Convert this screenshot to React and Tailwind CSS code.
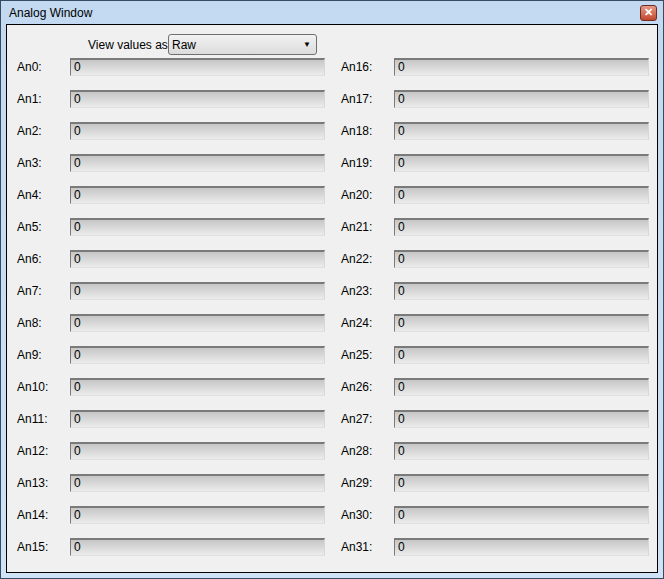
export default function App() {
  const rows = Array.from({ length: 16 }, (_, i) => i);
  const Field = ({ label }) => (
    <div className="flex items-center h-[18px]">
      <div className="w-[53px] text-[12px] text-black">{label}</div>
      <div className="w-[255px] h-[18px] border-t-2 border-l border-t-[#7a7a7a] border-l-[#7a7a7a] border-r border-b border-r-[#d8d8d8] border-b-[#e0e0e0] bg-gradient-to-b from-[#c6c6c6] to-[#ececec] text-[12px] leading-[15px] pl-[3px] text-black">0</div>
    </div>
  );
  return (
    <div className="w-[664px] h-[579px] border border-[#384a5f] bg-gradient-to-b from-[#c2d9f1] to-[#cfe2f6] flex flex-col px-[5px] pb-[5px]" style={{ fontFamily: "'Liberation Sans', Arial, sans-serif" }}>
      <div className="h-[23px] flex items-center justify-between pl-[3px]">
        <span className="text-[12px] text-black">Analog Window</span>
        <div className="w-[17px] h-[16px] rounded-[3px] border border-[#6d2d22] bg-gradient-to-b from-[#e59a87] to-[#c2452a] flex items-center justify-center text-white text-[11px] font-bold leading-none mr-[1px]">✕</div>
      </div>
      <div className="flex-1 border border-black bg-[#f0f0f0] flex flex-col pl-[10px] pt-[9px]">
        <div className="flex items-center h-[21px] mb-[3px]">
          <span className="ml-[71px] text-[12px] text-black w-[80px] whitespace-nowrap">View values as:</span>
          <div className="w-[149px] h-[21px] rounded-[3px] border border-[#707070] bg-gradient-to-b from-[#f2f2f2] to-[#dcdcdc] flex items-center justify-between px-[3px]">
            <span className="text-[12px] text-black">Raw</span>
            <span className="text-[8px] text-black mr-[2px]">▼</span>
          </div>
        </div>
        <div className="flex gap-[16px]">
          {[0, 16].map((off) => (
            <div key={off} className="flex flex-col gap-[14px]">
              {rows.map((i) => <Field key={i} label={`An${i + off}:`} />)}
            </div>
          ))}
        </div>
      </div>
    </div>
  );
}
